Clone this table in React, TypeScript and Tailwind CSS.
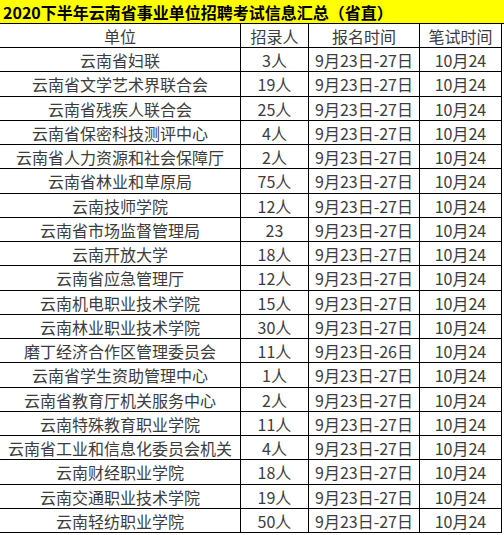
import React from "react";

const rows: [string, string, string][] = [
  ["云南省妇联", "3人", "9月23日-27日"],
  ["云南省文学艺术界联合会", "19人", "9月23日-27日"],
  ["云南省残疾人联合会", "25人", "9月23日-27日"],
  ["云南省保密科技测评中心", "4人", "9月23日-27日"],
  ["云南省人力资源和社会保障厅", "2人", "9月23日-27日"],
  ["云南省林业和草原局", "75人", "9月23日-27日"],
  ["云南技师学院", "12人", "9月23日-27日"],
  ["云南省市场监督管理局", "23", "9月23日-27日"],
  ["云南开放大学", "18人", "9月23日-27日"],
  ["云南省应急管理厅", "12人", "9月23日-27日"],
  ["云南机电职业技术学院", "15人", "9月23日-27日"],
  ["云南林业职业技术学院", "30人", "9月23日-27日"],
  ["磨丁经济合作区管理委员会", "11人", "9月23日-26日"],
  ["云南省学生资助管理中心", "1人", "9月23日-27日"],
  ["云南省教育厅机关服务中心", "2人", "9月23日-27日"],
  ["云南特殊教育职业学院", "11人", "9月23日-27日"],
  ["云南省工业和信息化委员会机关", "4人", "9月23日-27日"],
  ["云南财经职业学院", "18人", "9月23日-27日"],
  ["云南交通职业技术学院", "19人", "9月23日-27日"],
  ["云南轻纺职业学院", "50人", "9月23日-27日"],
];

function Row({ cells, tall }: { cells: string[]; tall: boolean }) {
  return (
    <div
      className={`flex border-b border-black ${tall ? "h-[25px]" : "h-[24px]"}`}
    >
      <div className="w-[241px] border-r border-black flex items-center justify-center">{cells[0]}</div>
      <div className="w-[68px] border-r border-black flex items-center justify-center">{cells[1]}</div>
      <div className="w-[111px] border-r border-black flex items-center justify-center">{cells[2]}</div>
      <div className="w-[82px] border-r border-black flex items-center justify-center">{cells[3]}</div>
    </div>
  );
}

export default function App() {
  return (
    <div
      className="w-[504px] h-[535px] bg-white overflow-hidden text-[16px] leading-none text-[#3c3c3c]"
      style={{ fontFamily: '"Microsoft YaHei", "Noto Sans CJK SC", "Noto Sans", sans-serif' }}
    >
      <div className="h-[24px] w-[504px] bg-[#ffff00] border-b border-black flex items-center pl-[3px] font-bold text-black">
        2020下半年云南省事业单位招聘考试信息汇总（省直）
      </div>
      <div className="w-[502px]">
        <Row cells={["单位", "招录人", "报名时间", "笔试时间"]} tall={false} />
        {rows.map((r, i) => (
          <Row key={i} cells={[r[0], r[1], r[2], "10月24"]} tall={i % 4 === 1} />
        ))}
      </div>
    </div>
  );
}
